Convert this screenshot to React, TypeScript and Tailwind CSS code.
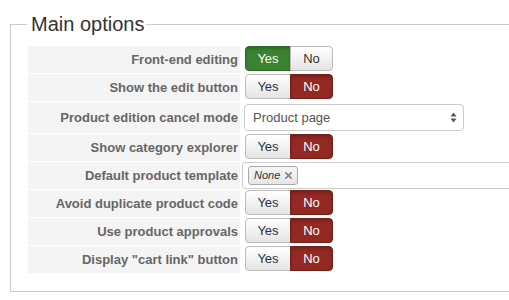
import { X } from 'lucide-react'

type Row = {
  label: string
  kind: 'toggle' | 'select' | 'tags'
  value?: boolean
  tall?: boolean
}

const rows: Row[] = [
  { label: 'Front-end editing', kind: 'toggle', value: true },
  { label: 'Show the edit button', kind: 'toggle', value: false },
  { label: 'Product edition cancel mode', kind: 'select', tall: true },
  { label: 'Show category explorer', kind: 'toggle', value: false },
  { label: 'Default product template', kind: 'tags' },
  { label: 'Avoid duplicate product code', kind: 'toggle', value: false },
  { label: 'Use product approvals', kind: 'toggle', value: false },
  { label: 'Display "cart link" button', kind: 'toggle', value: false },
]

function YesNo({ value }: { value: boolean }) {
  const idle =
    'bg-gradient-to-b from-white to-[#e4e4e4] text-[#333] border-[#bbb]'
  return (
    <div className="flex h-[25px] text-[13px] leading-none">
      <span
        className={`flex w-[46px] items-center justify-center rounded-l-[4px] border ${
          value
            ? 'bg-[#3a8331] text-white border-[#2c6a25] shadow-[inset_0_2px_3px_rgba(0,0,0,0.2)]'
            : idle
        }`}
      >
        Yes
      </span>
      <span
        className={`-ml-px flex w-[43px] items-center justify-center rounded-r-[4px] border ${
          value
            ? idle
            : 'bg-[#942822] text-white border-[#74201b] shadow-[inset_0_2px_3px_rgba(0,0,0,0.2)]'
        }`}
      >
        No
      </span>
    </div>
  )
}

function SelectBox() {
  return (
    <div className="mt-[2px] ml-[-1px] flex h-[27px] w-[220px] items-center justify-between rounded-[4px] border border-[#ccc] bg-white pl-[8px] pr-[6px] text-[13px] text-[#555]">
      <span>Product page</span>
      <svg width="7" height="11" viewBox="0 0 7 11">
        <path d="M3.5 0.5 L6.5 4.5 L0.5 4.5 Z" fill="#555" />
        <path d="M3.5 10.5 L6.5 6.5 L0.5 6.5 Z" fill="#555" />
      </svg>
    </div>
  )
}

function TagBox() {
  return (
    <div className="ml-[-3px] flex h-[27px] w-[290px] items-center rounded-l-[3px] border border-[#ccc] bg-white pl-[5px]">
      <span className="flex h-[19px] items-center gap-[3px] rounded-[3px] border border-[#aaa] bg-gradient-to-b from-[#f6f6f6] to-[#e6e6e6] pl-[5px] pr-[3px] text-[11px] italic text-[#333]">
        None
        <X className="h-[11px] w-[11px] text-[#777]" strokeWidth={3} />
      </span>
    </div>
  )
}

export default function App() {
  return (
    <div
      className="h-[300px] w-[509px] overflow-hidden bg-white"
      style={{ fontFamily: '"Liberation Sans", Arial, sans-serif' }}
    >
      <fieldset className="ml-[10px] mt-[12px] w-[520px] border border-[#ccc] pb-[17px] pl-[17px]">
        <legend className="ml-[-1px] pl-[4px] pr-[2px] text-[20px] leading-[24px] text-[#333]">
          Main options
        </legend>

        <div className="mt-[10px] flex flex-col">
          {rows.map((row) => (
            <div
              key={row.label}
              className={`flex ${row.tall ? 'h-[32px]' : 'h-[28px]'}`}
            >
              <div className="flex w-[212px] items-center justify-end border-b border-white bg-[#f4f4f4] pr-[2px] text-[13px] font-bold text-[#666]">
                {row.label}
              </div>
              <div className="flex items-start pl-[5px]">
                {row.kind === 'toggle' && <YesNo value={!!row.value} />}
                {row.kind === 'select' && <SelectBox />}
                {row.kind === 'tags' && <TagBox />}
              </div>
            </div>
          ))}
        </div>
      </fieldset>
    </div>
  )
}
